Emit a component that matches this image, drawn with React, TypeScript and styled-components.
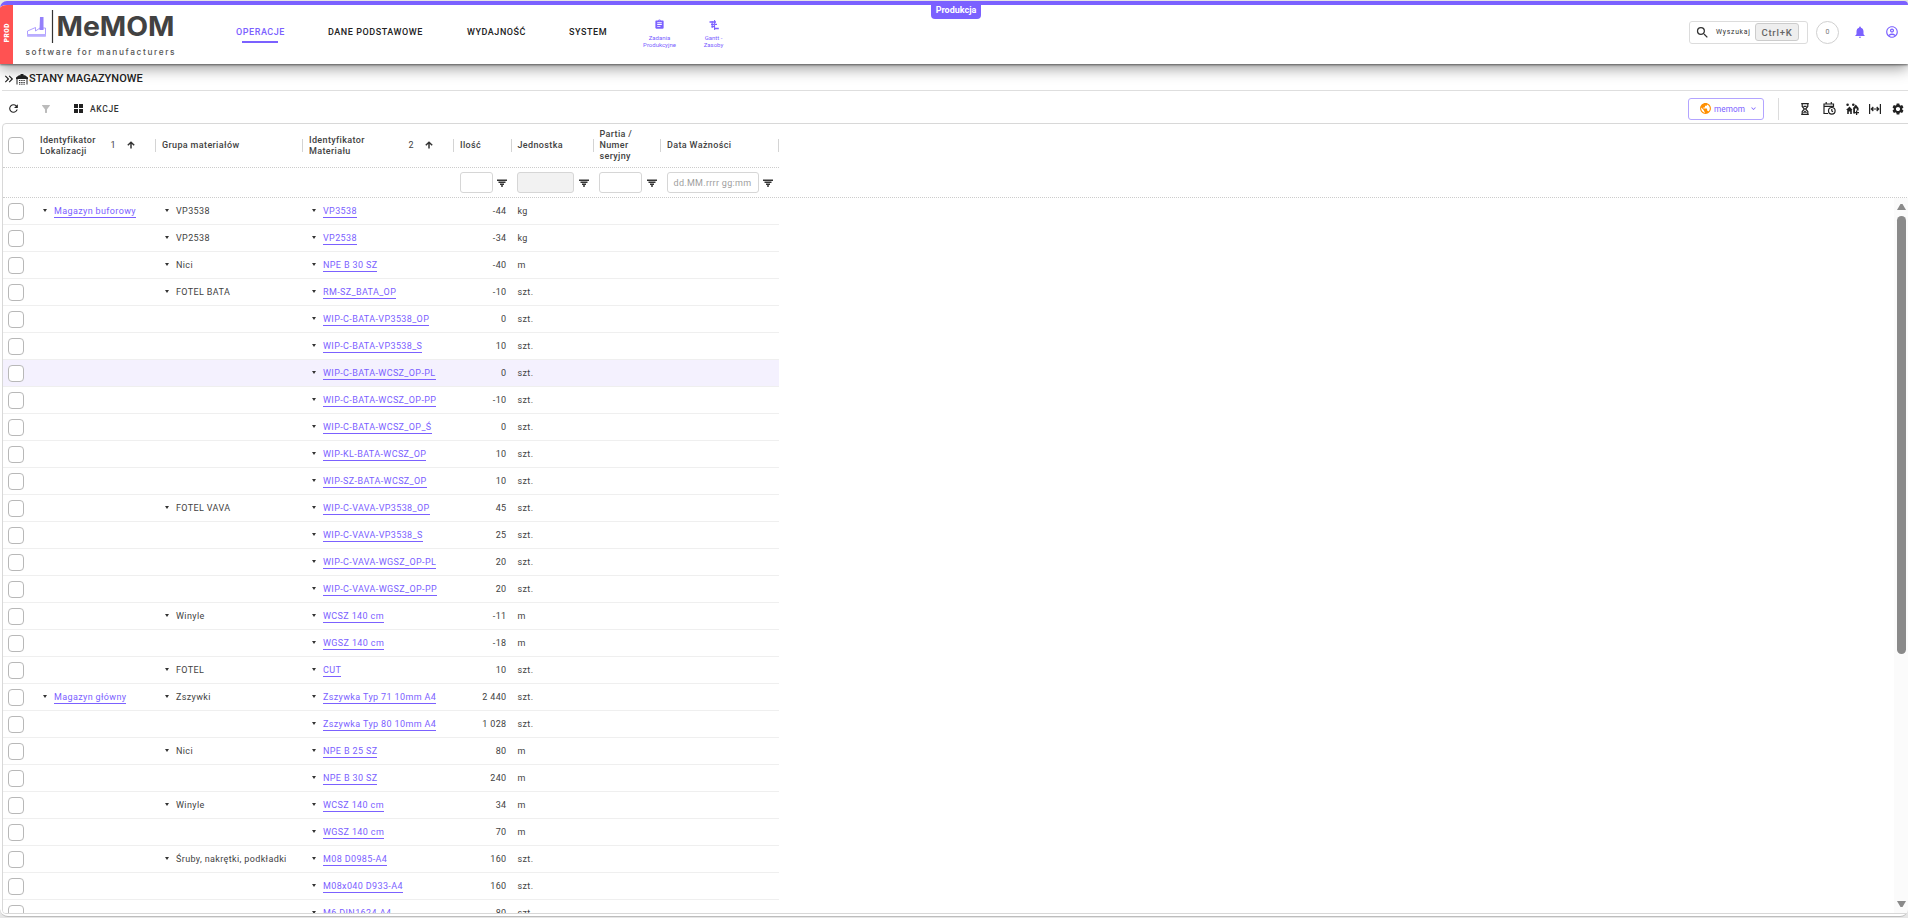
import React from 'react';
import styled, { createGlobalStyle } from 'styled-components';
import {
  MdKeyboardDoubleArrowRight, MdRefresh, MdFilterAlt, MdAssignment, MdSearch, MdNotifications,
  MdOutlineAccountCircle, MdPublic, MdSettings, MdKeyboardArrowDown,
} from 'react-icons/md';

const Global = createGlobalStyle`
  * { box-sizing: border-box; }
  html, body, #root { height: 100%; }
  body { margin: 0; overflow: hidden; background: #e6e6e6; font-family: Roboto, "Liberation Sans", sans-serif; color: #333; }
  svg { display: block; flex: none; }
`;

const accent = '#7b61ff';

const Frame = styled.div`
  height: 918px;
  padding-top: 1px;
  background: #e6e6e6;
`;
const Shell = styled.div`
  height: 916px;
  width: 1908px;
  display: flex;
  flex-direction: column;
  background: #fff;
  border-top: 4px solid ${accent};
  border-bottom: 1px solid #bdbdbd;
  border-radius: 7px 4px 8px 8px;
  overflow: hidden;
`;
const Header = styled.header`
  position: relative;
  z-index: 2;
  display: flex;
  flex: none;
  height: 59px;
  background: #fff;
  box-shadow: 0 1px 2px rgba(0,0,0,.5), 0 4px 14px rgba(0,0,0,.42);
`;
const ProdTag = styled.div`
  width: 13px;
  background: #ff5252;
  color: #fff;
  display: flex;
  align-items: center;
  justify-content: center;
  span { writing-mode: vertical-rl; transform: rotate(180deg); font-size: 6.5px; font-weight: 900; letter-spacing: .5px; margin-top: -4px; }
`;
const EnvBadge = styled.div`
  position: absolute;
  left: 931px;
  top: 0;
  width: 50px;
  height: 14px;
  border-radius: 0 0 4px 4px;
  background: ${accent};
  color: #fff;
  font-size: 9px;
  font-weight: 700;
  line-height: 11px;
  text-align: center;
`;
const Brand = styled.div`
  width: 223px;
  padding: 5px 0 0 12px;
`;
const Nav = styled.nav`
  display: flex;
  height: 54px;
  align-items: center;
`;
const NavItem = styled.a<{ $w: number; $active?: boolean }>`
  width: ${p => p.$w}px;
  font-size: 9px;
  line-height: 12px;
  font-weight: 500;
  letter-spacing: .55px;
  white-space: nowrap;
  color: ${p => (p.$active ? accent : '#222')};
`;
const ActiveMark = styled.i`
  display: block;
  width: 36px;
  height: 2px;
  margin: 3px 0 -5px 6px;
  background: ${accent};
`;
const Shortcut = styled.a<{ $w: number }>`
  width: ${p => p.$w}px;
  display: flex;
  flex-direction: column;
  align-items: center;
  color: ${accent};
  font-size: 6px;
  line-height: 7px;
  text-align: center;
  gap: 4px;
  padding-top: 3px;
  white-space: pre-line;
`;
const HeaderTools = styled.div`
  margin-left: auto;
  display: flex;
  align-items: center;
  height: 54px;
  padding-right: 9px;
`;
const SearchBox = styled.div`
  width: 119px;
  height: 23px;
  border: 1px solid #dcdcdc;
  border-radius: 3px;
  display: flex;
  align-items: center;
  padding-left: 5px;
  font-size: 6.8px;
  letter-spacing: .75px;
  color: #333;
`;
const Hint = styled.span`width: 45px; padding-left: 6px; flex: none;`;
const Keys = styled.kbd`
  width: 44px;
  height: 18px;
  border: 1px solid #ccc;
  border-radius: 3px;
  background: #eee;
  color: #666;
  font: 500 9.5px/17px Roboto, sans-serif;
  letter-spacing: .8px;
  text-align: center;
`;
const Counter = styled.div`
  width: 23px;
  height: 23px;
  margin: 0 14px 0 8px;
  border: 1px solid #d0d0d0;
  border-radius: 50%;
  color: #777;
  font-size: 7px;
  line-height: 20px;
  text-align: center;
`;
const ToolIcon = styled.span<{ $ml?: number; $c?: string }>`
  margin-left: ${p => p.$ml || 0}px;
  color: ${p => p.$c || '#222'};
  display: flex;
`;
const TitleBar = styled.div`
  flex: none;
  height: 27px;
  margin-left: 2px;
  padding: 4px 0 0 0;
  display: flex;
  align-items: center;
  border-bottom: 1px solid #dedede;
  color: #222;
  h1 { margin: 0 0 0 1px; font-size: 11px; font-weight: 500; line-height: 14px; letter-spacing: 0; }
`;
const Toolbar = styled.div`
  flex: none;
  height: 32px;
  padding: 3px 0 0 7px;
  display: flex;
  align-items: center;
`;
const Actions = styled.span`
  margin-left: 7px;
  font-size: 8.5px;
  font-weight: 500;
  letter-spacing: .65px;
  line-height: 12px;
  color: #333;
`;
const TenantButton = styled.button`
  margin: 0 14px 0 auto;
  width: 76px;
  height: 22px;
  padding: 0 0 0 10px;
  display: flex;
  align-items: center;
  border: 1px solid #b3a4ff;
  border-radius: 3px;
  background: #fff;
  color: ${accent};
  font: 400 8.2px/12px Roboto, sans-serif;
  letter-spacing: .1px;
  span { width: 37px; text-align: left; padding-left: 2px; }
`;
const ViewTools = styled.div`
  height: 22px;
  width: 130px;
  display: flex;
  align-items: center;
  border-left: 1px solid #dcdcdc;
`;
const Grid = styled.section`
  flex: none;
  width: 1910px;
  height: 791px;
  margin-left: 2px;
  display: flex;
  flex-direction: column;
  border: 1px solid #d8d8d8;
  border-radius: 4px 0 0 4px;
  overflow: hidden;
`;
const Columns = styled.div`
  display: grid;
  grid-template-columns: 31px 122px 147px 151px 57.5px 82px 67.5px 117.5px;
  width: 775.5px;
`;
const HeadRow = styled(Columns)`
  flex: none;
  height: 44px;
  width: 776px;
  align-items: center;
  border-bottom: 1px dotted #ccc;
`;
const HeadCell = styled.div`
  height: 13px;
  display: flex;
  align-items: center;
  padding-left: 6px;
  border-right: 1px solid #d4d4d4;
  font-size: 9px;
  line-height: 11px;
  font-weight: 500;
  letter-spacing: .36px;
  white-space: pre-line;
  color: #424242;
`;
const Sort = styled.span`
  display: flex;
  align-items: center;
  gap: 11px;
  margin: 0 20px 0 auto;
  font-weight: 400;
  svg { margin-top: -2px; }
`;
const FilterRow = styled.div`
  flex: none;
  height: 30px;
  border-bottom: 1px dotted #ccc;
`;
const FilterCell = styled.div`
  display: flex;
  align-items: center;
  height: 29px;
  padding-left: 5.5px;
`;
const FilterInput = styled.div<{ $w: number; $off?: boolean }>`
  width: ${p => p.$w}px;
  height: 21px;
  margin-right: 4.5px;
  padding-left: 6px;
  border: 1px solid #d6d6d6;
  border-radius: 3px;
  background: ${p => (p.$off ? '#f2f2f2' : '#fff')};
  color: #9e9e9e;
  font-size: 9px;
  line-height: 20px;
  letter-spacing: .3px;
  white-space: nowrap;
`;
const Body = styled.div`
  flex: 1;
  min-height: 0;
  display: flex;
  overflow: hidden;
`;
const Rows = styled.div`flex: 1;`;
const Row = styled(Columns)<{ $hot?: boolean }>`
  height: 27.03px;
  align-items: center;
  border-bottom: 1px solid #efefef;
  background: ${p => (p.$hot ? '#f4f1fe' : '#fff')};
`;
const Check = styled.span`
  display: block;
  width: 16px;
  height: 17px;
  margin-left: 5px;
  border: 1px solid #b8b8b8;
  border-radius: 4px;
  background: #fff;
`;
const Cell = styled.div<{ $num?: boolean }>`
  display: flex;
  align-items: center;
  justify-content: ${p => (p.$num ? 'flex-end' : 'flex-start')};
  padding: 0 5px 0 6px;
  height: 12px;
  margin-top: -1px;
  font-size: 9px;
  line-height: 12px;
  letter-spacing: .37px;
  white-space: nowrap;
  color: #424242;
`;
const Caret = styled.i`
  margin: 0 7.5px 0 2.5px;
  border: solid transparent;
  border-width: 3px 2.5px 0;
  border-top-color: #333;
`;
const Link = styled.a`
  height: 13px;
  margin-bottom: -1px;
  color: ${accent};
  border-bottom: 1px solid ${accent};
`;
const ScrollTrack = styled.div`
  width: 17px;
  padding: 6px 0 6px 3px;
  background: #fbfbfb;
  display: flex;
  flex-direction: column;
`;
const Thumb = styled.div`
  width: 9px;
  height: 438px;
  margin: 6px 0 auto;
  border-radius: 5px;
  background: #8a8a8a;
`;

const Logo = () => (
  <svg width="156" height="52" viewBox="0 0 156 52">
    <path d="M2.500 26V21L10.500 17.500V21L15 18H20.500V26Z" fill="#fff" stroke="#9a86ff" strokeWidth=".8" />
    <path d="M14.500 20L15 7H18.500V20Z" fill="#9480fb" />
    <path d="M2 24H21V26.500H2Z" fill="#b9adff" />
    <path d="M27.500 0V33" stroke="#333" strokeWidth="1.200" />
    <text x="31.500" y="26" fontFamily="Inter, sans-serif" fontWeight="700" fontSize="26.500" fill="#424242" textLength="118" lengthAdjust="spacingAndGlyphs">MeMOM</text>
    <text x=".5" y="44.500" fontFamily="Inter, sans-serif" fontWeight="500" fontSize="8.300" fill="#555" textLength="149">software for manufacturers</text>
  </svg>
);
const Warehouse = () => (
  <svg width="12" height="11" viewBox="0 0 12 11">
    <path d="M0 3.500L3 1.200H4.500V0H7.500V1.200H9L12 3.500V5H0Z" fill="#222" />
    <path d="M1 4.500V10.500M11 4.500V10.500" stroke="#222" />
    <path d="M3 6.500H9M3 8.500H9M3 10.200H9" stroke="#333" strokeDasharray="1.400 .8" />
  </svg>
);
const GanttIcon = () => (
  <svg width="10" height="10" viewBox="0 0 10 10" fill="none" stroke={accent} strokeWidth="1.300">
    <path d="M.5 2H7M2 4.300H5M6 4.300H8M2.500 6.500H6M5 8.500H9.800" />
    <path d="M3.200 1V8M5.600 0V10" strokeWidth="1" />
  </svg>
);
const Blocks = () => (
  <svg width="9" height="9" viewBox="0 0 9 9" fill="#222">
    <path d="M0 0H4V4H0ZM5 0H9V4H5ZM0 5H4V9H0ZM5 5H9V9H5Z" />
  </svg>
);
const ArrowUp = () => (
  <svg width="8" height="8" viewBox="0 0 8 8" fill="none" stroke="#333" strokeWidth="1.500">
    <path d="M4 7.500V1.200M.8 4.200L4 1.200L7.200 4.200" />
  </svg>
);
const FilterIcon = () => (
  <svg width="10" height="8" viewBox="0 0 10 8" stroke="#333" strokeWidth="1.500">
    <path d="M0 1.200H10M1.500 3.200H8.500M3 5.200H7M4 7.100H6" />
  </svg>
);
const Hourglass = () => (
  <svg width="8" height="12" viewBox="0 0 8 12" fill="none" stroke="#222" strokeWidth="1.200">
    <path d="M.2 .7H7.800M.2 11.300H7.800M1.200 1V3.500L3.400 6L1.200 8.500V11M6.800 1V3.500L4.600 6L6.800 8.500V11M2.500 3.300H5.500M2.500 9.800L4 8.300L5.500 9.800" />
  </svg>
);
const CalendarClock = () => (
  <svg width="13" height="13" viewBox="0 0 13 13" fill="none" stroke="#222" strokeWidth="1.200">
    <path d="M5 11.500H1V2H10.500V5M1 4.300H10.500M3.200 0V2M8.300 0V2" />
    <circle cx="8.800" cy="8.800" r="3.300" />
    <path d="M8.800 7V9L10 9.800" />
  </svg>
);
const GroupAdd = () => (
  <svg width="13" height="12" viewBox="0 0 13 12" fill="#222">
    <circle cx="1.600" cy="1.800" r="1.300" />
    <circle cx="7.300" cy="1.800" r="1.300" />
    <path d="M0 7L3.500 3.600L6.600 7H5.800V11H4.200V8.500H2.800V11H1.200V7ZM7 5L9.800 1.500L12.600 5V7.500H10.800V5.500H9V10.500H7.200V6Z" />
    <path d="M10.600 7.500V12M8.400 9.700H13" stroke="#222" strokeWidth="1.300" />
  </svg>
);
const WidthIcon = () => (
  <svg width="12" height="10" viewBox="0 0 12 10" fill="none" stroke="#222" strokeWidth="1.200">
    <path d="M.6 0V10M11.400 0V10M2.300 5H9.700M4.300 3L2.300 5L4.300 7M7.700 3L9.700 5L7.700 7" />
  </svg>
);
const ScrollArrow = ({ down }: { down?: boolean }) => (
  <svg width="9" height="6" viewBox="0 0 9 6"><path d={down ? 'M0 0H9L5.500 6H3.500Z' : 'M0 6H9L5.500 0H3.500Z'} fill="#8a8a8a" /></svg>
);

type Stock = [string, string, string, string, string];
const stock: Stock[] = [
  ['Magazyn buforowy', 'VP3538', 'VP3538', '-44', 'kg'],
  ['', 'VP2538', 'VP2538', '-34', 'kg'],
  ['', 'Nici', 'NPE B 30 SZ', '-40', 'm'],
  ['', 'FOTEL BATA', 'RM-SZ_BATA_OP', '-10', 'szt.'],
  ['', '', 'WIP-C-BATA-VP3538_OP', '0', 'szt.'],
  ['', '', 'WIP-C-BATA-VP3538_S', '10', 'szt.'],
  ['', '', 'WIP-C-BATA-WCSZ_OP-PL', '0', 'szt.'],
  ['', '', 'WIP-C-BATA-WCSZ_OP-PP', '-10', 'szt.'],
  ['', '', 'WIP-C-BATA-WCSZ_OP_Ś', '0', 'szt.'],
  ['', '', 'WIP-KL-BATA-WCSZ_OP', '10', 'szt.'],
  ['', '', 'WIP-SZ-BATA-WCSZ_OP', '10', 'szt.'],
  ['', 'FOTEL VAVA', 'WIP-C-VAVA-VP3538_OP', '45', 'szt.'],
  ['', '', 'WIP-C-VAVA-VP3538_S', '25', 'szt.'],
  ['', '', 'WIP-C-VAVA-WGSZ_OP-PL', '20', 'szt.'],
  ['', '', 'WIP-C-VAVA-WGSZ_OP-PP', '20', 'szt.'],
  ['', 'Winyle', 'WCSZ 140 cm', '-11', 'm'],
  ['', '', 'WGSZ 140 cm', '-18', 'm'],
  ['', 'FOTEL', 'CUT', '10', 'szt.'],
  ['Magazyn główny', 'Zszywki', 'Zszywka Typ 71 10mm A4', '2 440', 'szt.'],
  ['', '', 'Zszywka Typ 80 10mm A4', '1 028', 'szt.'],
  ['', 'Nici', 'NPE B 25 SZ', '80', 'm'],
  ['', '', 'NPE B 30 SZ', '240', 'm'],
  ['', 'Winyle', 'WCSZ 140 cm', '34', 'm'],
  ['', '', 'WGSZ 140 cm', '70', 'm'],
  ['', 'Śruby, nakrętki, podkładki', 'M08 D0985-A4', '160', 'szt.'],
  ['', '', 'M08x040 D933-A4', '160', 'szt.'],
  ['', '', 'M6 DIN1624-A4', '80', 'szt.'],
];

export default function App() {
  return (
    <Frame>
      <Global />
      <Shell>
        <Header>
          <ProdTag><span>PROD</span></ProdTag>
          <Brand><Logo /></Brand>
          <Nav>
            <NavItem $w={92} $active>OPERACJE<ActiveMark /></NavItem>
            <NavItem $w={139}>DANE PODSTAWOWE</NavItem>
            <NavItem $w={102}>WYDAJNOŚĆ</NavItem>
            <NavItem $w={63}>SYSTEM</NavItem>
            <Shortcut $w={55}><MdAssignment size={11} />{'Zadania\nProdukcyjne'}</Shortcut>
            <Shortcut $w={53}><GanttIcon />{'Gantt -\nZasoby'}</Shortcut>
          </Nav>
          <HeaderTools>
            <SearchBox><MdSearch size={15} /><Hint>Wyszukaj</Hint><Keys>Ctrl+K</Keys></SearchBox>
            <Counter>0</Counter>
            <ToolIcon $c={accent}><MdNotifications size={14} /></ToolIcon>
            <ToolIcon $c={accent} $ml={18}><MdOutlineAccountCircle size={14} /></ToolIcon>
          </HeaderTools>
          <EnvBadge>Produkcja</EnvBadge>
        </Header>
        <TitleBar>
          <MdKeyboardDoubleArrowRight size={14} />
          <Warehouse />
          <h1>STANY MAGAZYNOWE</h1>
        </TitleBar>
        <Toolbar>
          <ToolIcon><MdRefresh size={13} /></ToolIcon>
          <ToolIcon $ml={20} $c="#bbb"><MdFilterAlt size={12} /></ToolIcon>
          <ToolIcon $ml={22}><Blocks /></ToolIcon>
          <Actions>AKCJE</Actions>
          <TenantButton>
            <MdPublic size={13} color="#ff8f00" /><span>memom</span><MdKeyboardArrowDown size={9} />
          </TenantButton>
          <ViewTools>
            <ToolIcon $ml={22}><Hourglass /></ToolIcon>
            <ToolIcon $ml={14}><CalendarClock /></ToolIcon>
            <ToolIcon $ml={10}><GroupAdd /></ToolIcon>
            <ToolIcon $ml={10}><WidthIcon /></ToolIcon>
            <ToolIcon $ml={10}><MdSettings size={14} /></ToolIcon>
          </ViewTools>
        </Toolbar>
        <Grid>
          <HeadRow>
            <Check />
            <HeadCell>{'Identyfikator\nLokalizacji'}<Sort>1<ArrowUp /></Sort></HeadCell>
            <HeadCell>Grupa materiałów</HeadCell>
            <HeadCell>{'Identyfikator\nMateriału'}<Sort>2<ArrowUp /></Sort></HeadCell>
            <HeadCell>Ilość</HeadCell>
            <HeadCell>Jednostka</HeadCell>
            <HeadCell>{'Partia /\nNumer\nseryjny'}</HeadCell>
            <HeadCell>Data Ważności</HeadCell>
          </HeadRow>
          <FilterRow>
            <Columns>
              <span /><span /><span /><span />
              <FilterCell><FilterInput $w={33} /><FilterIcon /></FilterCell>
              <FilterCell><FilterInput $w={57} $off /><FilterIcon /></FilterCell>
              <FilterCell><FilterInput $w={43} /><FilterIcon /></FilterCell>
              <FilterCell><FilterInput $w={92}>dd.MM.rrrr gg:mm</FilterInput><FilterIcon /></FilterCell>
            </Columns>
          </FilterRow>
          <Body>
            <Rows>
              {stock.map(([place, group, item, amount, unit], i) => (
                <Row key={i} $hot={i === 6}>
                  <Check />
                  <Cell>{place && <><Caret /><Link>{place}</Link></>}</Cell>
                  <Cell>{group && <><Caret />{group}</>}</Cell>
                  <Cell><Caret /><Link>{item}</Link></Cell>
                  <Cell $num>{amount}</Cell>
                  <Cell>{unit}</Cell>
                </Row>
              ))}
            </Rows>
            <ScrollTrack><ScrollArrow /><Thumb /><ScrollArrow down /></ScrollTrack>
          </Body>
        </Grid>
      </Shell>
    </Frame>
  );
}
